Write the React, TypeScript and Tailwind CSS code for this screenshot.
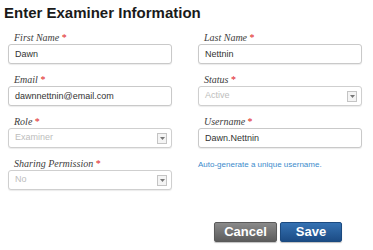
import { ReactNode } from "react"

function Label({ text }: { text: string }) {
  return (
    <div className="h-[11px] pl-[6px] text-[10px] leading-[11px] italic text-[#404040] font-['Liberation_Serif',serif]">
      {text} <span className="not-italic text-[#e02020] text-[10px]">*</span>
    </div>
  )
}

function TextBox({ value }: { value: string }) {
  return (
    <div className="mt-[-1px] h-[20px] rounded-[3px] border border-[#c9c9c9] bg-white px-[6px] text-[9px] leading-[18px] text-[#333] shadow-[0_1px_1px_rgba(0,0,0,0.08)]">
      {value}
    </div>
  )
}

function SelectBox({ value }: { value: string }) {
  return (
    <div className="mt-[-1px] flex h-[20px] items-center justify-between rounded-[3px] border border-[#cfcfcf] bg-white pl-[6px] pr-[4px] text-[9px] text-[#bdbdbd] shadow-[0_1px_1px_rgba(0,0,0,0.08)]">
      <span>{value}</span>
      <span className="flex h-[11px] w-[10px] items-center justify-center border border-[#c4c4c4] bg-[#f4f4f4]">
        <svg width="5" height="3" viewBox="0 0 5 3">
          <path d="M0 0h5L2.5 3z" fill="#777" />
        </svg>
      </span>
    </div>
  )
}

function Field({ label, children }: { label: string; children: ReactNode }) {
  return (
    <div className="flex flex-col gap-[2px]">
      <Label text={label} />
      {children}
    </div>
  )
}

export default function App() {
  return (
    <div className="h-[250px] w-[373px] bg-white font-['Liberation_Sans',Arial,sans-serif]">
      <h1 className="pl-[4px] pt-[3px] text-[15px] font-bold leading-[20px] text-[#1a1a1a]">
        Enter Examiner Information
      </h1>
      <div className="mt-[9px] grid grid-cols-[164px_164px] gap-x-[26px] gap-y-[10px] pl-[8px]">
        <Field label="First Name">
          <TextBox value="Dawn" />
        </Field>
        <Field label="Last Name">
          <TextBox value="Nettnin" />
        </Field>
        <Field label="Email">
          <TextBox value="dawnnettnin@email.com" />
        </Field>
        <Field label="Status">
          <SelectBox value="Active" />
        </Field>
        <Field label="Role">
          <SelectBox value="Examiner" />
        </Field>
        <Field label="Username">
          <TextBox value="Dawn.Nettnin" />
        </Field>
        <Field label="Sharing Permission">
          <SelectBox value="No" />
        </Field>
        <div>
          <a className="block pt-[1px] text-[8px] leading-[12px] text-[#3d8bcc]">
            Auto-generate a unique username.
          </a>
        </div>
      </div>
      <div className="mt-[32px] flex justify-end gap-[3px] pr-[31px]">
        <button className="h-[20px] w-[63px] rounded-[2px] border border-[#5a5a5a] bg-gradient-to-b from-[#8a8a8a] to-[#5c5c5c] text-[13px] font-bold leading-[18px] text-white shadow-[0_1px_1px_rgba(0,0,0,0.25)]">
          Cancel
        </button>
        <button className="h-[20px] w-[62px] rounded-[2px] border border-[#1b4a80] bg-gradient-to-b from-[#3572b3] to-[#1c4c85] text-[13px] font-bold leading-[18px] text-white shadow-[0_1px_1px_rgba(0,0,0,0.25)]">
          Save
        </button>
      </div>
    </div>
  )
}
